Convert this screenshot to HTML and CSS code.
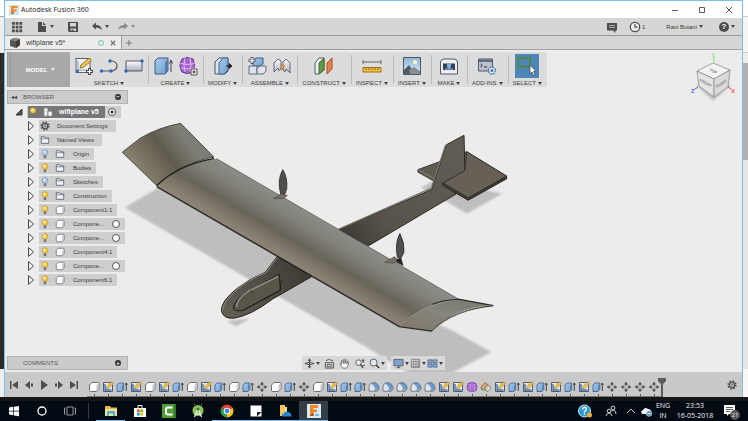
FILE: index.html
```html
<!DOCTYPE html>
<html lang="en">
<head>
<meta charset="utf-8">
<title>Autodesk Fusion 360</title>
<link rel="stylesheet" href="styles.css">
</head>
<body>
<svg class="sprite" aria-hidden="true">
  <defs>
    <linearGradient id="blueFace" x1="0" y1="0" x2="1" y2="1"><stop offset="0" stop-color="#a8cdf0"/><stop offset="1" stop-color="#6d9dcf"/></linearGradient>
    <linearGradient id="greyFace" x1="0" y1="0" x2="0" y2="1"><stop offset="0" stop-color="#fdfdfe"/><stop offset="1" stop-color="#a9b0ba"/></linearGradient>
    <linearGradient id="sky" x1="0" y1="0" x2="0" y2="1"><stop offset="0" stop-color="#8ab6d8"/><stop offset="1" stop-color="#e3eef4"/></linearGradient>
  </defs>
  <symbol id="cube" viewBox="0 0 12 12"><path d="M1.500 4 4 1.500h6q1 0 1 1V8L8.500 10.500h-6q-1 0-1-1z" fill="#fff" stroke="#6a6e76"/><path d="M8.500 10V4.200L10.800 2v6z" fill="#c3c8d0"/></symbol>
  <symbol id="sketch" viewBox="0 0 12 12"><path d="M1.500 1.500h9v9h-9z" fill="#e8eef6" stroke="#555c66"/><path d="M3 3v6h6.500" fill="none" stroke="#3d6fb4" stroke-width="1.400"/><path d="m4.800 5.500 4.800-4.800 2 2-4.800 4.500-2.400.7z" fill="#f0c04a" stroke="#8e702c" stroke-width=".5"/></symbol>
  <symbol id="extrude" viewBox="0 0 12 12"><path d="M1 4 2.800 2h5v6.500L6 10.500H1z" fill="url(#blueFace)" stroke="#47678e" stroke-width=".9"/><path d="M6 10V4.200L7.700 2.500v6z" fill="#5784b8"/><path d="M10.300 10V2.500M9.200 3.800l1.100-1.800 1.100 1.800" fill="none" stroke="#333" stroke-width=".9"/></symbol>
  <symbol id="fillet" viewBox="0 0 12 12"><path d="M1 10V5.500Q1.500 1.500 6 1.500q4.500.5 5 5.500v1.500L8.500 10.500H7V9L4.500 10.500z" fill="#dce4ee" stroke="#5b646f" stroke-width=".8"/><path d="M4 2.500 6.500 1.800Q10 3 10.500 7.500L8 9.500Q7.500 5 4 2.500z" fill="#6b9bd0" stroke="#446b9b" stroke-width=".5"/></symbol>
  <symbol id="move" viewBox="0 0 12 12"><path d="M6 .7 8 3.400H6.600v1.400H5.400V3.400H4zM6 11.300 4 8.600h1.400V7.200h1.200v1.400H8zM.7 6l2.700-2v1.400h1.400v1.200H3.400V8zM11.300 6 8.600 8V6.600H7.200V5.400h1.400V4z" fill="#4c4c4c"/></symbol>
  <symbol id="form" viewBox="0 0 12 12"><path d="M2 2.500q4-2.500 8 0 2 3.500 0 7-4 2.500-8 0-2-3.500 0-7z" fill="#a768cf" stroke="#6d3f98" stroke-width=".8"/><path d="M1 6q5 1.500 10 0M2 3.500q4 1.200 8 0M2 8.800q4 1.200 8 0M4.500 1.500q-1 4.500 0 9M8 1.500q1 4.500 0 9" fill="none" stroke="#c797e4" stroke-width=".5"/></symbol>
  <symbol id="pattern" viewBox="0 0 12 12"><path d="M1 6 5 1.500 8 4 4.500 9 1.500 8.500z" fill="#dca27e" stroke="#80543c" stroke-width=".7"/><path d="M5 6.500 8.500 4 11 7.500 8 10.500 5.500 9.500z" fill="#ded9c7" stroke="#66695a" stroke-width=".7"/><path d="M3 7.500h4l-1 2H3z" fill="#7fb06d"/></symbol>
  <symbol id="folder" viewBox="0 0 12 12"><path d="M1.500 10V2h4l1 1.500h4V10z" fill="#eef1f5" stroke="#596270"/><path d="M1.500 4.500h9" stroke="#596270" stroke-width=".8"/></symbol>
  <symbol id="bulb" viewBox="0 0 12 12"><circle cx="6" cy="4.300" r="3.400" fill="var(--glow)" stroke="var(--rim)" stroke-width=".8"/><path d="M4.500 7.500h3v3.500h-3z" fill="#77746b"/><circle cx="5" cy="3.400" r="1.200" fill="#fff" opacity=".85"/></symbol>
  <symbol id="gear" viewBox="0 0 12 12"><circle cx="6" cy="6" r="4.700" fill="none" stroke="#505050" stroke-width="1.800" stroke-dasharray="1.850 1.840"/><circle cx="6" cy="6" r="3.300" fill="#d8d8d8" stroke="#505050" stroke-width="1.500"/><circle cx="6" cy="6" r="1.300" fill="none" stroke="#505050" stroke-width=".9"/></symbol>
  <symbol id="tri" viewBox="0 0 8 12"><path d="M1.500 1.500 6.500 6l-5 4.500z" fill="#f2f2f2" stroke="#4a4a4a"/></symbol>
</svg>

<div class="desktop">
  <div class="behind behind-left"></div>
  <main class="app">
    <header class="titlebar">
      <svg class="i10" viewBox="0 0 10 10"><path fill="#cfe4f2" d="M0 0h10v10H0z"/><path fill="#f08a24" d="M2 1h6.500v2H4.500v1.500h3v2h-3V9H2z"/><path fill="#b65b18" d="m2 9 2.500-2.500V9z"/></svg>
      <h1>Autodesk Fusion 360</h1>
      <div class="winbtns">
        <button aria-label="Minimize"><svg viewBox="0 0 8 8"><path d="M1 4.500h6"/></svg></button>
        <button aria-label="Maximize"><svg viewBox="0 0 8 8"><path d="M1.500 1.500h5v5h-5z"/></svg></button>
        <button aria-label="Close"><svg viewBox="0 0 8 8"><path d="m1 1 6 6M7 1 1 7"/></svg></button>
      </div>
    </header>

    <nav class="quickbar">
      <button class="q-grid" aria-label="Data panel"><svg class="i12" viewBox="0 0 12 12"><path fill="#4d4d4d" d="M1 1h2.800v2.800H1zM4.700 1h2.800v2.800H4.700zM8.400 1h2.800v2.800H8.400zM1 4.700h2.800v2.800H1zM4.700 4.700h2.800v2.800H4.700zM8.400 4.700h2.800v2.800H8.400zM1 8.400h2.800v2.800H1zM4.700 8.400h2.800v2.800H4.700zM8.400 8.400h2.800v2.800H8.400z"/></svg></button>
      <button class="q-file" aria-label="File"><svg class="i12" viewBox="0 0 12 12"><path fill="#4d4d4d" d="M2 1h4v4h4v6H2zM7 1l3 3H7z"/></svg><i class="caret"></i></button>
      <button class="q-save" aria-label="Save"><svg class="i12" viewBox="0 0 12 12"><path fill="#4d4d4d" fill-rule="evenodd" d="M1 1h10v10H2l-1-1zM3 2v3.500h6V2zM3.500 7.500V10h1V8.500h2V10H9V7.500z"/></svg></button>
      <button class="q-undo" aria-label="Undo"><svg class="i12" viewBox="0 0 12 12"><path fill="#4d4d4d" d="m1 5 4-3.500V4q5 0 6 5-2-2.500-6-2.500v2z"/></svg><i class="caret"></i></button>
      <button class="q-redo" aria-label="Redo"><svg class="i12" viewBox="0 0 12 12"><path fill="#8b8b8b" d="M11 5 7 1.500V4Q2 4 1 9q2-2.500 6-2.500v2z"/></svg><i class="caret faint"></i></button>
      <div class="account">
        <button aria-label="Comments"><svg class="i12" viewBox="0 0 12 12"><path fill="#4d4d4d" d="M1 2h10v7.500H9.500V12L7 9.500H1z"/><path stroke="#aaa" d="M3 4.500h6M3 6.500h6"/></svg></button>
        <button class="jobs" aria-label="Job status"><svg class="i12" viewBox="0 0 12 12"><circle cx="6" cy="6" r="4.700" fill="#eee" stroke="#4d4d4d" stroke-width="1.300"/><path d="M6 3v3.200h2.500" fill="none" stroke="#4d4d4d" stroke-width="1.200"/></svg>1</button>
        <button class="user">Ravi Butani<i class="caret"></i></button>
        <button class="help" aria-label="Help"><span class="qmark">?</span><i class="caret"></i></button>
      </div>
    </nav>

    <nav class="tabs">
      <div class="tab">
        <svg class="i12" viewBox="0 0 12 12"><path d="m1 3 4-2 6 1v6l-4 3-6-2z" fill="#555"/><path d="m1 3 6 1.200L11 2 5 1z" fill="#888"/><path d="M7 4.200V11l4-3V2z" fill="#3b3b3b"/></svg>
        <span>wifiplane v5*</span>
        <i class="ring"></i>
        <button aria-label="Close tab"><svg class="i6" viewBox="0 0 6 6"><path d="m.8.800 4.400 4.400M5.200.800.800 5.200" stroke="#777" stroke-width="1.300"/></svg></button>
      </div>
      <button class="newtab" aria-label="New tab"><svg class="i6" viewBox="0 0 6 6"><path d="M3 0v6M0 3h6" stroke="#777"/></svg></button>
    </nav>

    <section class="workspace">
      <svg class="canvas" viewBox="5 49 737 323" role="img" aria-label="Airplane model">
        <defs>
          <linearGradient id="wing" gradientUnits="userSpaceOnUse" x1="310" y1="213" x2="283" y2="259"><stop offset="0" stop-color="#8a8d86"/><stop offset=".25" stop-color="#81827a"/><stop offset=".6" stop-color="#69645a"/><stop offset=".85" stop-color="#827b6e"/><stop offset="1" stop-color="#8d8578"/></linearGradient>
          <linearGradient id="tip" gradientUnits="userSpaceOnUse" x1="138" y1="170" x2="190" y2="130"><stop offset="0" stop-color="#89826f"/><stop offset=".5" stop-color="#5f5a4e"/><stop offset=".85" stop-color="#7d7e76"/><stop offset="1" stop-color="#7b7d76"/></linearGradient>
          <linearGradient id="tip2" x1="0" y1="1" x2="1" y2="0"><stop offset="0" stop-color="#7f7767"/><stop offset=".5" stop-color="#85857c"/><stop offset="1" stop-color="#75766f"/></linearGradient>
          <linearGradient id="body" gradientUnits="userSpaceOnUse" x1="340" y1="235" x2="465" y2="150"><stop offset="0" stop-color="#3c3933"/><stop offset=".3" stop-color="#57534b"/><stop offset="1" stop-color="#625d54"/></linearGradient>
          <linearGradient id="nose" gradientUnits="userSpaceOnUse" x1="225" y1="312" x2="300" y2="265"><stop offset="0" stop-color="#625e54"/><stop offset="1" stop-color="#403d37"/></linearGradient>
          <filter id="soft"><feGaussianBlur stdDeviation="1"/></filter>
        </defs>
        <g fill="#bebebe" filter="url(#soft)">
          <path d="m124 207 34-20 180 98 112 44 42 23-42 22h-40l-47-29z"/>
          <path d="m421 187 14-7 68 13-36 20-27-16zM226 321l10 5 14-8z"/>
        </g>
        <path d="m418 169 49-18 40 24.500V178l-38.500 21.500L418 171.500z" fill="#605b51" stroke="#22201d" stroke-width=".8"/>
        <path d="m418 169 50.500 28.500L507 175.700" fill="none" stroke="#99958b" stroke-width=".7"/>
        <path d="m338 229 93.700-40 15-45 17.600-9.500 1 36-22 12.500 13 10.500-88 52z" fill="url(#body)" stroke="#24221e" stroke-width=".9"/>
        <path d="m339 228.500 92.500-41 14-42.500 1.500-1" fill="none" stroke="#77776f" stroke-width="1.200"/>
        <path d="m465 170-22 12.500 25.500 15 38.500-22L467 151z" fill="#666056" stroke="#24221e" stroke-width=".7"/>
        <path d="m443 182.500 25.500 15L507 176v2.300l-38.500 21.400L443 185z" fill="#444038" stroke="#1f1d1a" stroke-width=".6"/>
        <path d="m277 256-12 16q-17 7-28 16-17 13-16 23 2 8 13 7 17-3 38-19l40-23z" fill="url(#nose)" stroke="#23211e"/>
        <path d="m277 257-11.500 15.500q-18 7-28.500 16.500-15 12-15 22" fill="none" stroke="#8e8d83"/>
        <path d="m279 274 1 16-37 20q-9 2-10-2 1-8 13-16z" fill="#5a554b" stroke="#1f1d1a"/>
        <path d="m278 276-30 15q-12 8-12 16" fill="none" stroke="#969085" stroke-width="1.500"/>
        <path d="m281 280-1 10-37 20M250 290l3 2.500" fill="none" stroke="#1c1a18" stroke-width=".8"/>
        <path d="M156 185.500q25-24 60-27.500l243 141q-40 6-59 27z" fill="url(#wing)"/>
        <path d="m216 158 243 141" fill="none" stroke="#5b5d57" stroke-width=".8"/>
        <path d="m156 186 243.500 140.500" fill="none" stroke="#292722" stroke-width="1.500"/>
        <path d="m121.500 151.500 18-14Q157 127 180 122.500l33 33.500q-35 8-57 29z" fill="url(#tip)" stroke="#34322d" stroke-width=".8"/>
        <path d="M156 185q22-21 57-27l-1-2" fill="none" stroke="#1c1b18" stroke-width="1.200"/>
        <path d="M400 326q19-21 59-27l34.700 6q-39 2-62.200 26z" fill="url(#tip2)"/>
        <path d="m399 326.500 32.500 4.500q23-22 62.200-25.500l-35-6.500q-17 1-26 5" fill="none" stroke="#2b2a25" stroke-width="1.200"/>
        <path d="M432 330q24-21 61-25.500" fill="none" stroke="#aaa79c" stroke-width=".6"/>
        <g fill="#4d504b" stroke="#272824" stroke-width=".8">
          <path d="M282.500 169q5 8 4 19l-2 6h-4q-4-15 2-25z"/>
          <path d="m273 198 8-4.500 6 1.500-4 3z" fill="#776f63" stroke="#5c554c"/>
          <path d="M400 233q5 10 4 19l-3 6-3.500-1q-3-14 2.500-24z"/>
          <path d="m384.500 262 10-5.500 4 3.500-5 3z" fill="#776f63" stroke="#5c554c"/>
          <path d="m397 259 4-1 2 7-6-3z" fill="#262724"/>
        </g>
      </svg>

      <div class="ribbon">
        <button class="model">MODEL<i class="caret light"></i></button>
        <div class="group sketchgrp"><div class="icons">
          <svg viewBox="0 0 20 20"><rect x="2" y="2.500" width="14" height="14" fill="#eef2f7" stroke="#59616d"/><path d="M4 5v9h9" fill="none" stroke="#8897ac"/><path d="m6 12 1-3 8-7 2.500 2.500-8 7z" fill="#f1c14c" stroke="#7c6228" stroke-width=".8"/><circle cx="3.500" cy="15" r="1.500" fill="#2d66c4"/><path d="M15.500 12v7M12 15.500h7" stroke="#444" stroke-width="3"/><path d="M15.500 13v5M13 15.500h5" stroke="#fff" stroke-width="1.200"/></svg>
          <svg viewBox="0 0 20 20"><path d="M2 15h11q5-1 5-5t-5-5h-2" fill="none" stroke="#555" stroke-width="1.200"/><g fill="#2d66c4"><circle cx="2.500" cy="15" r="1.700"/><circle cx="12" cy="15" r="1.700"/><circle cx="11" cy="5" r="1.700"/></g></svg>
          <svg viewBox="0 0 20 20"><path d="M2 5h16v10H2z" fill="url(#greyFace)" stroke="#535b66"/><g fill="#2d66c4"><circle cx="18" cy="5" r="1.700"/><circle cx="2" cy="15" r="1.700"/></g></svg>
        </div><button>SKETCH<i class="caret"></i></button></div>
        <div class="group"><div class="icons">
          <svg viewBox="0 0 20 20"><path d="m2 5 3-3h10v13l-3 3H2z" fill="url(#blueFace)" stroke="#3f5d83"/><path d="M12 17V6l3-3v12z" fill="#547eaf"/><path d="M18 16V5M16.500 7.500 18 4l1.500 3.500" fill="none" stroke="#333" stroke-width=".9"/></svg>
          <svg viewBox="0 0 20 20"><path d="M4 3q5-3 11 0 3 6 0 13-6 3-11 0-4-6 0-13z" fill="#a565cd" stroke="#64378d"/><path d="M2.500 7.500q7 2 14 0M2.500 12q7 2 14 0M7 2q-2 7 0 14M12 2q2 7 0 14" fill="none" stroke="#e0bdf3"/><path d="M13 13h6v6h-6z" fill="#eee" stroke="#555"/><path d="M16 14.500v3M14.500 16h3" stroke="#333"/></svg>
        </div><button>CREATE<i class="caret"></i></button></div>
        <div class="group"><div class="icons">
          <svg viewBox="0 0 20 20"><path d="m2 6 4-4h9v13l-3 3H2z" fill="#dbe3ed" stroke="#47566b"/><path d="m6 7 4-5h5v12l-4 4H6z" fill="url(#blueFace)" stroke="#44678f"/><path d="M13 10h4M16 7.500l3 2.500-3 2.500z" stroke="#222" fill="#222"/></svg>
        </div><button>MODIFY<i class="caret"></i></button></div>
        <div class="group"><div class="icons">
          <svg viewBox="0 0 20 20"><path d="m6 4 3-2h7v6l-3 2H6z" fill="url(#blueFace)" stroke="#3f5d83"/><path d="M2 10h8v8H2z" fill="#dde3ea" stroke="#606a77"/><path d="m10 12 3-2h6v5l-3 3h-6z" fill="#e1e6ed" stroke="#606a77"/><path d="M5 1v7M1.500 4.500h7" stroke="#555" stroke-width="3"/><path d="M5 2v5M2.500 4.500h5" stroke="#fff" stroke-width="1.300"/></svg>
          <svg viewBox="0 0 20 20"><path d="m2 7 4-4 3 2v8l-2 2-1-3-4 4zM18 7l-4-4-3 3v8l2 2 1-3 4 4z" fill="url(#greyFace)" stroke="#626b77"/><path d="m9 8 3 2-3 4" fill="none" stroke="#e0812c" stroke-width="1.500"/></svg>
        </div><button>ASSEMBLE<i class="caret"></i></button></div>
        <div class="group"><div class="icons">
          <svg viewBox="0 0 20 20"><path d="m1 7 4-5h5v12l-5 4H1z" fill="#eceff2" stroke="#59616a"/><path d="m5 7 5-5v12l-5 4z" fill="#5f9a47" stroke="#41722e"/><path d="m13 7 5-5v11l-5 5z" fill="#e98248" stroke="#a65225"/></svg>
        </div><button>CONSTRUCT<i class="caret"></i></button></div>
        <div class="group"><div class="icons">
          <svg viewBox="0 0 20 20"><path d="M1 6h18M1 4v4M19 4v4" stroke="#666" fill="none"/><path d="M1 11.500h18V16H1z" fill="#f2bd3c" stroke="#a2731d"/><path d="M4 12v2M7 12v2M10 12v2M13 12v2M16 12v2" stroke="#76541a" stroke-width=".8"/></svg>
        </div><button>INSPECT<i class="caret"></i></button></div>
        <div class="group"><div class="icons">
          <svg viewBox="0 0 20 20"><path d="M1.500 1.500h17v17h-17z" fill="url(#sky)" stroke="#4c5660"/><circle cx="13" cy="6" r="2" fill="#fff8c6"/><path d="m2 14 5-5 6 9H2z" fill="#505963"/><path d="m7 14 5-3 6 4v3H8z" fill="#858d95"/></svg>
        </div><button>INSERT<i class="caret"></i></button></div>
        <div class="group"><div class="icons">
          <svg viewBox="0 0 20 20"><path d="M1.500 6q.5-3 3.500-3h10q3 0 3.500 3v12h-17z" fill="#eceff2" stroke="#505862"/><path d="M4 7.500h12V14H4z" fill="#37404c"/><path d="M8 8h4v3l-2 2-2-2z" fill="#79b4ed"/><path d="M6 13h8" stroke="#91bfe8"/></svg>
        </div><button>MAKE<i class="caret"></i></button></div>
        <div class="group"><div class="icons">
          <svg viewBox="0 0 20 20"><path d="M1.500 3h14v12h-14z" fill="#b9c1cd" stroke="#4e5866"/><path d="M2 3.500h13V6H2z" fill="#616d7f"/><path d="m3.500 8 2 1.500-2 1.500M7 11h3" fill="none" stroke="#333"/><circle cx="15" cy="14.500" r="3.500" fill="#e8eef7" stroke="#4a72ae" stroke-width="1.500" stroke-dasharray="1.800 .9"/><circle cx="15" cy="14.500" r="1.500" fill="#4a72ae"/></svg>
        </div><button>ADD-INS<i class="caret"></i></button></div>
        <div class="group select"><div class="icons">
          <svg viewBox="0 0 24 24"><path d="M0 0h24v24H0z" fill="#4f86b8"/><path d="M3 4h12v8.500H3z" fill="none" stroke="#4f8a2a" stroke-width="1.500"/><path d="M15 11v9l2-2 1.500 3.500 1.500-.7-1.500-3.300H21z" fill="#fff" stroke="#444" stroke-width=".7"/></svg>
        </div><button>SELECT<i class="caret"></i></button></div>
      </div>

      <svg class="viewcube" viewBox="0 0 50 50" role="img" aria-label="View cube">
        <path d="m7 32 17 16 18-16-18-6z" fill="#999" opacity=".55" filter="url(#soft)"/>
        <path d="m8 18 16-8 17 7-16 9z" fill="#f3f3f3" stroke="#8c8c8c" stroke-width=".8"/>
        <path d="m8 18 17 8v18L10 33z" fill="#e5e5e5" stroke="#8c8c8c" stroke-width=".8"/>
        <path d="m41 17-16 9v18l14-10z" fill="#dadada" stroke="#8c8c8c" stroke-width=".8"/>
        <path d="M25 3v6" stroke="#78df78"/><path d="m9 34-3 2" stroke="#4f4fe8"/><path d="m39 34 3 2" stroke="#e84f4f"/>
        <g font-family="Liberation Sans, sans-serif" font-weight="bold">
          <text x="22" y="4" font-size="6" fill="#88e688">Y</text><text x="2" y="40" font-size="6" fill="#5656ee">Z</text><text x="42" y="40" font-size="6" fill="#ee5656">X</text>
          <g font-size="4" fill="#888"><text transform="translate(10 28) rotate(28)">FRONT</text><text transform="translate(28 35) rotate(-32)">RIGHT</text><text transform="translate(20 18) rotate(22)">TOP</text></g>
        </g>
      </svg>

      <aside class="browser">
        <div class="panelhead"><span class="rewind">◂◂</span><h2>BROWSER</h2><button class="dot" aria-label="Collapse">−</button></div>
        <ul class="tree">
          <li class="root"><svg class="tri" viewBox="0 0 8 8"><path d="M7 1v6H1z" fill="#555" stroke="#333"/></svg><div class="row"><span class="active"><svg class="i10 on"><use href="#bulb"/></svg><svg class="i10" viewBox="0 0 12 12"><path d="M1 1h5v10H1z" fill="#eee" stroke="#777"/><path d="M6 5h5v6H6z" fill="#fff" stroke="#777"/></svg><b>wifiplane v5</b></span><input type="radio" name="active" checked aria-label="Activate wifiplane"></div></li>
          <li><svg class="tri"><use href="#tri"/></svg><div class="row wide"><svg class="i10"><use href="#gear"/></svg><span>Document Settings</span></div></li>
          <li><svg class="tri"><use href="#tri"/></svg><div class="row wide"><svg class="i10"><use href="#folder"/></svg><span>Named Views</span></div></li>
          <li><svg class="tri"><use href="#tri"/></svg><div class="row"><svg class="i10 off"><use href="#bulb"/></svg><svg class="i10"><use href="#folder"/></svg><span>Origin</span></div></li>
          <li><svg class="tri"><use href="#tri"/></svg><div class="row"><svg class="i10 on"><use href="#bulb"/></svg><svg class="i10"><use href="#folder"/></svg><span>Bodies</span></div></li>
          <li><svg class="tri"><use href="#tri"/></svg><div class="row"><svg class="i10 off"><use href="#bulb"/></svg><svg class="i10"><use href="#folder"/></svg><span>Sketches</span></div></li>
          <li><svg class="tri"><use href="#tri"/></svg><div class="row"><svg class="i10 on"><use href="#bulb"/></svg><svg class="i10"><use href="#folder"/></svg><span>Construction</span></div></li>
          <li><svg class="tri"><use href="#tri"/></svg><div class="row"><svg class="i10 on"><use href="#bulb"/></svg><svg class="i10"><use href="#cube"/></svg><span>Component1:1</span></div></li>
          <li><svg class="tri"><use href="#tri"/></svg><div class="row"><svg class="i10 on"><use href="#bulb"/></svg><svg class="i10"><use href="#cube"/></svg><span class="cut">Compone...</span><input type="radio" name="active" aria-label="Activate component 2"></div></li>
          <li><svg class="tri"><use href="#tri"/></svg><div class="row"><svg class="i10 on"><use href="#bulb"/></svg><svg class="i10"><use href="#cube"/></svg><span class="cut">Compone...</span><input type="radio" name="active" aria-label="Activate component 3"></div></li>
          <li><svg class="tri"><use href="#tri"/></svg><div class="row"><svg class="i10 on"><use href="#bulb"/></svg><svg class="i10"><use href="#cube"/></svg><span>Component4:1</span></div></li>
          <li><svg class="tri"><use href="#tri"/></svg><div class="row"><svg class="i10 on"><use href="#bulb"/></svg><svg class="i10"><use href="#cube"/></svg><span class="cut">Compone...</span><input type="radio" name="active" aria-label="Activate component 5"></div></li>
          <li><svg class="tri"><use href="#tri"/></svg><div class="row"><svg class="i10 on"><use href="#bulb"/></svg><svg class="i10"><use href="#cube"/></svg><span>Component6:1</span></div></li>
        </ul>
      </aside>

      <div class="bottom">
        <div class="panelhead comments"><h2>COMMENTS</h2><button class="dot" aria-label="Expand">+</button></div>
        <div class="navbars">
          <div class="navbar">
            <button aria-label="Orbit"><svg class="i12" viewBox="0 0 12 12"><path d="M6 1v10M1 6q5-3 10 0-5 3-10 0" fill="none" stroke="#444"/><path d="m4 3 2-2.500L8 3zM4 9l2 2.500L8 9z" fill="#444"/></svg><i class="caret"></i></button>
            <button aria-label="Look at"><svg class="i12" viewBox="0 0 12 12"><path d="M1.500 5h9v6h-9zM3.500 7h5v2.500h-5zM2 3l3-1.500L10 3" fill="none" stroke="#555"/></svg></button>
            <button aria-label="Pan"><svg class="i12" viewBox="0 0 12 12"><path d="M4 11 1 7q0-1.500 2 0L2.500 3q1-1 1.500.500L5 6V1.500q1-1 1.400 0V6L7.500 2q1.200-.5 1.200.5L8.500 6.500l1-2.500q1.300-.3 1 1L9.500 9 8 11z" fill="#fff" stroke="#555" stroke-width=".8"/></svg></button>
            <button aria-label="Zoom"><svg class="i12" viewBox="0 0 12 12"><circle cx="5" cy="5" r="3" fill="#edf3f7" stroke="#555"/><path d="m7 7 3 4" stroke="#444" stroke-width="1.500"/><path d="M10 1v4M8.500 3h3M9 8h3" stroke="#444"/></svg></button>
            <button aria-label="Fit"><svg class="i12" viewBox="0 0 12 12"><circle cx="5" cy="5" r="3.800" fill="#dcebf2" stroke="#555"/><path d="m8 8 3 3" stroke="#333" stroke-width="1.600"/></svg><i class="caret"></i></button>
          </div>
          <div class="navbar tight">
            <button aria-label="Display"><svg class="i12" viewBox="0 0 12 12"><path d="M1 1.500h10v7H1z" fill="#7fa3d0" stroke="#596370"/><path d="M4 10.500h4M6 8v3" stroke="#555"/></svg><i class="caret"></i></button>
            <button aria-label="Grid"><svg class="i12" viewBox="0 0 12 12"><path d="M1.500 1.500h9v9h-9zM4 1v10M6.500 1v10M9 1v10M1 4h10M1 6.500h10M1 9h10" fill="#e8e8e8" stroke="#777" stroke-width=".8"/></svg><i class="caret"></i></button>
            <button aria-label="Viewports"><svg class="i12" viewBox="0 0 12 12"><path d="M1 2h4.500v3.500H1zM6.500 2H11v3.500H6.500zM1 6.500h4.500V10H1zM6.500 6.500H11V10H6.500z" fill="#88a8d0" stroke="#48678f" stroke-width=".8"/></svg><i class="caret"></i></button>
          </div>
        </div>
      </div>
    </section>

    <footer class="timeline">
      <div class="player">
        <button aria-label="To start"><svg viewBox="0 0 10 10"><path d="M1 1h1.500v8H1zM9 1v8L3 5z"/></svg></button>
        <button aria-label="Step back"><svg viewBox="0 0 10 10"><path d="M6 1v8L1 5zM7 3.500h2v3H7z"/></svg></button>
        <button aria-label="Play"><svg viewBox="0 0 10 10"><path d="M2 0v10l7-5z"/></svg></button>
        <button aria-label="Step forward"><svg viewBox="0 0 10 10"><path d="M4 1v8l5-4zM1 3.500h2v3H1z"/></svg></button>
        <button aria-label="To end"><svg viewBox="0 0 10 10"><path d="M7.500 1H9v8H7.500zM1 1v8l6-4z"/></svg></button>
      </div>
      <ol class="steps">
        <li><svg><use href="#cube"/></svg></li><li><svg><use href="#sketch"/></svg></li><li><svg><use href="#extrude"/></svg></li><li><svg><use href="#sketch"/></svg></li><li><svg><use href="#cube"/></svg></li><li><svg><use href="#sketch"/></svg></li><li><svg><use href="#extrude"/></svg></li><li><svg><use href="#cube"/></svg></li><li><svg><use href="#sketch"/></svg></li><li><svg><use href="#extrude"/></svg></li><li><svg><use href="#cube"/></svg></li><li><svg><use href="#extrude"/></svg></li><li><svg><use href="#move"/></svg></li><li><svg><use href="#cube"/></svg></li><li><svg><use href="#extrude"/></svg></li><li><svg><use href="#move"/></svg></li><li><svg><use href="#cube"/></svg></li><li><svg><use href="#sketch"/></svg></li><li><svg><use href="#extrude"/></svg></li><li><svg><use href="#extrude"/></svg></li><li><svg><use href="#fillet"/></svg></li><li><svg><use href="#fillet"/></svg></li><li><svg><use href="#fillet"/></svg></li><li><svg><use href="#fillet"/></svg></li><li><svg><use href="#fillet"/></svg></li><li><svg><use href="#sketch"/></svg></li><li><svg><use href="#sketch"/></svg></li><li><svg><use href="#form"/></svg></li><li><svg><use href="#pattern"/></svg></li><li><svg><use href="#sketch"/></svg></li><li><svg><use href="#extrude"/></svg></li><li><svg><use href="#sketch"/></svg></li><li><svg><use href="#extrude"/></svg></li><li><svg><use href="#sketch"/></svg></li><li><svg><use href="#extrude"/></svg></li><li><svg><use href="#sketch"/></svg></li><li><svg><use href="#extrude"/></svg></li><li><svg><use href="#move"/></svg></li><li><svg><use href="#move"/></svg></li><li><svg><use href="#move"/></svg></li><li><svg><use href="#move"/></svg></li>
      </ol>
      <svg class="marker" viewBox="0 0 8 20"><path d="M0 1h8v3L5 7v13H3V7L0 4z" fill="#5b5b5b"/></svg>
      <button class="settings" aria-label="Timeline settings"><svg class="i10"><use href="#gear"/></svg></button>
    </footer>
  </main>
  <div class="behind behind-right"></div>
</div>

<footer class="taskbar">
  <button class="sys" aria-label="Start"><svg viewBox="0 0 12 12"><path fill="#fff" d="m1 2.500 4.300-.7v3.900H1zM6 1.700l5-.8v4.800H6zM1 6.400h4.300v3.900L1 9.600zM6 6.400h5v4.800l-5-.8z"/></svg></button>
  <button class="sys" aria-label="Cortana"><svg viewBox="0 0 12 12"><circle cx="6" cy="6" r="4" fill="none" stroke="#fff" stroke-width="1.300"/></svg></button>
  <button class="sys" aria-label="Task view"><svg viewBox="0 0 12 12"><path fill="none" stroke="#aaa" stroke-width=".9" d="M3 2h6v8H3zM1.500 3H.500v6h1M10.500 3h1v6h-1"/></svg></button>
  <i class="split"></i>
  <button class="task open" aria-label="Explorer"><svg viewBox="0 0 14 14"><path d="M1 2h5l1 1.500h6V12H1z" fill="#e6b657"/><path d="M1 5h12v7H1z" fill="#fbdf8b"/><path d="M3 12V8q0-1 1-1h6q1 0 1 1v4H9V9.500H5V12z" fill="#4aaede"/></svg></button>
  <button class="task" aria-label="Store"><svg viewBox="0 0 14 14"><path d="M1 4h12v9H1z" fill="#fff"/><path d="M5 4V1.500h4V4" fill="none" stroke="#fff"/><path fill="#f25022" d="M4 5.500h2.700v2.700H4z"/><path fill="#7fba00" d="M7.300 5.500H10v2.700H7.300z"/><path fill="#00a4ef" d="M4 8.800h2.700v2.700H4z"/><path fill="#ffb900" d="M7.300 8.800H10v2.700H7.300z"/></svg></button>
  <button class="task" aria-label="Camtasia"><svg viewBox="0 0 14 14"><path d="M0 0h14v14H0z" fill="#4d9f35"/><path d="M12 0v14h2V0z" fill="#38762a"/><path d="M10.500 3.500H6q-2 0-2 2v3q0 2 2 2h4.500" fill="none" stroke="#fff" stroke-width="2"/></svg></button>
  <button class="task" aria-label="Android Studio"><svg viewBox="0 0 14 14"><circle cx="7" cy="6.500" r="5.500" fill="#8bc05a"/><path d="m4 1-1-1M10 1l1-1" stroke="#8bc05a"/><path d="m7 4-3.500 9M7 4l3.500 9M4 10h6" stroke="#e6ece2" stroke-width="1.300" fill="none"/><circle cx="7" cy="5" r="1.500" fill="#446c35"/></svg></button>
  <button class="task open" aria-label="Chrome"><svg viewBox="0 0 14 14"><path d="M7 7 1.400 3.800A6.500 6.500 0 0 1 12.600 3.800z" fill="#e34133"/><path d="M7 7l5.600-3.200A6.500 6.500 0 0 1 7 13.500z" fill="#fbc116"/><path d="M7 7v6.500A6.500 6.500 0 0 1 1.400 3.800z" fill="#2ca14c"/><circle cx="7" cy="7" r="3.300" fill="#fff"/><circle cx="7" cy="7" r="2.400" fill="#4285f4"/></svg></button>
  <button class="task open" aria-label="Sticky notes"><svg viewBox="0 0 14 14"><path d="M1.500 1.500h11v11h-11z" fill="#fff"/><path d="M12.500 8H8v4.500z" fill="#222"/></svg></button>
  <button class="task open" aria-label="Cloud files"><svg viewBox="0 0 14 14"><path d="M2 1h5l1 11H2z" fill="#f4c961"/><path d="M7 3h2v8H7z" fill="#fbe4a4"/><path d="M4 12.500q-.500-3 2-3 1-3 4-1.500 3 0 3.500 4.500z" fill="#2685d6"/></svg></button>
  <button class="task open current" aria-label="Fusion 360"><svg viewBox="0 0 14 14"><path fill="#d9ecf6" d="M0 0h14v14H0z"/><path fill="#ee8423" d="M3 1h8v3H6.500v1.500H10V8H6.500v4H3z"/><path d="m3 12 3.500-3.500V12z" fill="#9e4d17"/><path d="M8 11h4" stroke="#55abe0" stroke-width="1.500"/></svg></button>
  <div class="tray">
    <button class="t-help" aria-label="Support"><svg viewBox="0 0 14 14"><circle cx="6.500" cy="7" r="6" fill="#2798d0" stroke="#d7edf8"/><path d="M4.500 5.500q0-2 2-2t2 1.700Q8.500 6.300 6.500 7.500v1M6.500 9.500V11" fill="none" stroke="#fff" stroke-width="1.400"/><circle cx="11.500" cy="11" r="2.500" fill="#f3ae2b"/></svg></button>
    <button class="t-people" aria-label="People"><svg viewBox="0 0 12 12"><g fill="none" stroke="#e5e5e5" stroke-width=".9"><circle cx="4" cy="6" r="1.800"/><path d="M1 11q1-3 3-3t3 3"/><circle cx="8" cy="3" r="1.900"/><path d="M6.500 6q4-2 4.500 3"/></g></svg></button>
    <button class="t-caret" aria-label="Hidden icons"><svg viewBox="0 0 12 12"><path d="m2 8 4-4 4 4" fill="none" stroke="#ddd" stroke-width=".9"/></svg></button>
    <button class="t-cloud" aria-label="Sync"><svg viewBox="0 0 12 12"><path d="M2 9q-2-3 1-4 2-3.500 5-1 3 0 3 3 0 2-2 2z" fill="#f0f3f7"/><circle cx="9" cy="8.500" r="2.800" fill="#5b86be" stroke="#fff" stroke-width=".6"/><path d="M7.500 8.500h3" stroke="#fff"/></svg></button>
    <div class="stack lang"><span>ENG</span><span>IN</span></div>
    <div class="stack clock"><time>23:53</time><span>16-05-2018</span></div>
    <button class="notify" aria-label="21 notifications"><svg viewBox="0 0 14 14"><path d="M1 1h11v9H6l-2 2v-2H1z" fill="#fff"/><path d="M3 3.500h7M3 5.500h7M3 7.500h4" stroke="#333" stroke-width=".8"/></svg><span class="badge">21</span></button>
  </div>
</footer>
</body>
</html>
```
FILE: styles.css
```css
* { box-sizing: border-box; }
body {
  margin: 0;
  min-height: 100vh;
  display: flex;
  flex-direction: column;
  overflow: hidden;
  font: 6px/8px "Liberation Sans", sans-serif;
  color: #3c3c3c;
}
button {
  display: flex;
  align-items: center;
  justify-content: center;
  padding: 0;
  border: 0;
  background: none;
  font: inherit;
  color: inherit;
}
h1, h2, ul, ol { margin: 0; padding: 0; font: inherit; list-style: none; }
svg { display: block; flex: none; }
.sprite { position: absolute; width: 0; height: 0; }
.i6 { width: 6px; height: 6px; }
.i10 { width: 10px; height: 10px; }
.i12 { width: 12px; height: 12px; }
.caret {
  flex: none;
  margin-left: 2px;
  border: 2px solid transparent;
  border-top: 3px solid #444;
  border-bottom: 0;
}
.faint { border-top-color: #888; }
.light { border-top-color: #eee; margin-left: 4px; }

.desktop { flex: 1; display: flex; min-height: 0; }
.behind { flex: none; background: #f3f3f3; }
.behind-left {
  width: 4px;
  background: linear-gradient(#fff 0 16px, #aaa 16px 17px, #eee 17px 53px, #2b2b2b 53px 369px, #eee 369px);
}
.behind-right {
  width: 5px;
  background: linear-gradient(#fff 0 16px, #ccc 16px 17px, #f5f5f5 17px 52px, #ccc 52px 53px, #eee 53px 63px, #b0b0b0 63px 160px, #e6e6e6 160px 369px, #f8f8f8 369px);
}
.app {
  flex: 1;
  min-width: 0;
  display: flex;
  flex-direction: column;
  border: 1px solid #7dbdf0;
  border-bottom: 0;
  background: #ececec;
}

.titlebar {
  height: 17px;
  display: flex;
  align-items: center;
  gap: 2px;
  padding-left: 4px;
  background: #fff;
  font: 7px/10px "Open Sans", sans-serif;
  color: #222;
}
.winbtns { margin-left: auto; display: flex; }
.winbtns button { width: 27px; height: 16px; }
.winbtns svg { width: 8px; height: 8px; fill: none; stroke: #333; stroke-width: .8; }

.quickbar {
  height: 18px;
  display: flex;
  align-items: center;
  padding-left: 6px;
  background: #d6d6d6;
  border-bottom: 1px solid #999;
}
.q-file { margin-left: 13px; }
.q-save { margin-left: 13px; }
.q-undo { margin-left: 12px; }
.q-redo { margin-left: 8px; }
.account { margin-left: auto; display: flex; align-items: center; padding-right: 7px; }
.jobs { margin-left: 11px; gap: 1px; }
.user { margin-left: 21px; }
.help { margin-left: 16px; }
.qmark {
  width: 10px;
  height: 10px;
  border-radius: 5px;
  background: #4d4d4d;
  color: #fff;
  font: bold 8px/10px "Liberation Sans", sans-serif;
}

.tabs {
  height: 14px;
  display: flex;
  background: #d6d6d6;
  border-bottom: 1px solid #a2a2a2;
}
.tab {
  display: flex;
  align-items: center;
  width: 117px;
  padding: 0 5px 0 4px;
  background: #ececec;
  border-right: 1px solid #999;
  font-size: 7px;
}
.tab span { margin-left: 5px; }
.ring { width: 6px; height: 6px; margin: 0 6px 0 auto; border: 1px solid #72c4a4; border-radius: 3px; }
.newtab { width: 14px; }

.workspace {
  position: relative;
  flex: 1;
  min-height: 0;
  display: flex;
  flex-direction: column;
  align-items: flex-start;
  padding: 2px;
}
.canvas { position: absolute; inset: 0; width: 100%; height: 100%; }
.ribbon {
  position: relative;
  display: flex;
  height: 35px;
  background: #dcdcdc;
}
.model { width: 63px; background: #a9a9a9; color: #fff; font-weight: bold; border-left: 4px double #999; }
.group {
  position: relative;
  display: flex;
  flex-direction: column;
  align-items: center;
  justify-content: space-between;
  min-width: 36px;
  padding: 2px 4px 0;
}
.group + .group::before { content: ""; position: absolute; left: 0; top: 3px; bottom: 3px; width: 1px; background: #bdbdbd; }
.group button { height: 8px; }
.icons { display: flex; align-items: center; gap: 5px; height: 24px; }
.icons svg { width: 20px; height: 20px; }
.group:not(.sketchgrp) { padding: 2px 5px 0; }
.select .icons svg { width: 24px; height: 24px; }

.viewcube { position: absolute; top: 3px; right: 3px; width: 50px; height: 50px; overflow: visible; }

.browser { position: relative; margin-top: 3px; }
.panelhead {
  display: flex;
  align-items: center;
  width: 121px;
  height: 14px;
  padding: 0 5px 0 3px;
  background: #cbcbcb;
  border: 1px solid #b2b2b2;
  color: #5a5a5a;
}
.rewind { width: 12px; font-size: 6px; color: #333; }
.dot {
  width: 6px;
  height: 6px;
  margin-left: auto;
  margin-right: 1px;
  border-radius: 3px;
  background: #333;
  color: #fff;
  font: bold 6px/6px "Liberation Sans", sans-serif;
}
.tree { padding: 1px 0 0 20px; }
.tree li { display: flex; align-items: center; height: 14px; gap: 4px; }
.tree .tri { width: 8px; height: 12px; }
.root { margin-left: -12px; }
.root .tri { width: 8px; height: 8px; }
.row {
  display: flex;
  align-items: center;
  height: 12px;
  gap: 5px;
  padding: 0 5px 0 1px;
  background: #cecece;
}
.wide { padding-right: 8px; }
.row .off + svg, .row .on + svg { margin-right: 1px; }
.row span { margin-left: 2px; }
.root .row { gap: 3px; }
.row .active {
  display: flex;
  align-items: center;
  gap: 5px;
  height: 12px;
  margin-left: 0;
  padding-right: 6px;
  background: #777;
  color: #fff;
  font-size: 7px;
}
.on { --glow: #fbd246; --rim: #b98d22; }
.off { --glow: #b3cdf5; --rim: #7089b8; }
.row input {
  appearance: none;
  width: 8px;
  height: 8px;
  margin: 0;
  border: 1px solid #555;
  border-radius: 4px;
  background: #fff;
}
.row input:checked { background: radial-gradient(#333 0 1px, #fff 2px); }
.cut { width: 34px; }

.bottom { position: relative; display: grid; grid-template-columns: 121px 1fr; align-self: stretch; margin-top: auto; align-items: center; }
.comments { padding-left: 15px; }
.navbars { display: flex; gap: 4px; justify-content: center; padding-right: 122px; }
.navbar { display: flex; align-items: center; gap: 4px; height: 14px; padding: 0 2px; background: #d8d8d8; }
.tight { gap: 1px; }
.navbar .caret { margin-left: 1px; }
.navbar .i12 { width: 11px; height: 11px; }

.timeline {
  height: 25px;
  display: flex;
  align-items: stretch;
  padding: 0 4px 0 2px;
  background: #c9c9c9;
  overflow: hidden;
}
.player { display: flex; gap: 1px; width: 80px; padding-top: 1px; }
.player button { width: 14px; }
.player svg { width: 10px; height: 10px; fill: #4f4f4f; }
.steps { display: flex; }
.steps li { position: relative; width: 14px; border-bottom: 1px solid #777; padding: 9px 1px 0; }
.steps li::after { content: ""; position: absolute; left: 7px; bottom: 0; width: 1px; height: 2px; background: #555; }
.steps svg { width: 12px; height: 12px; }
.marker { width: 8px; height: 20px; margin: 5px 0 0 -3px; }
.settings { width: 12px; margin-left: auto; }

.taskbar {
  position: relative;
  flex: none;
  display: flex;
  height: 24px;
  background: #020a14;
  border-top: 4px solid #161616;
  color: #f2f2f2;
}
.taskbar svg { width: 14px; height: 14px; }
.sys { width: 28px; }
.taskbar .sys svg { width: 12px; height: 12px; }
.split { width: 1px; margin: 2px 7px 2px 4px; background: #333a44; }
.task { width: 29px; border-bottom: 1px solid transparent; }
.open { border-bottom-color: #76b9ed; background-clip: padding-box; }
.current { background-color: #353d47; }
.tray { display: flex; align-items: center; margin-left: auto; font: 7px/10px "Open Sans", sans-serif; }
.taskbar .tray button:not(.t-help):not(.notify) svg { width: 12px; height: 12px; }
.t-people { margin-left: 13px; }
.t-caret { margin-left: 8px; }
.t-cloud { margin-left: 3px; }
.stack { display: flex; flex-direction: column; align-items: center; }
.lang { width: 22px; }
.clock { width: 42px; }
.notify { position: relative; width: 27px; margin-right: 5px; }
.badge {
  position: absolute;
  right: 3px;
  bottom: -2px;
  width: 10px;
  height: 10px;
  border-radius: 5px;
  background: #555;
  font: 6px/10px "Open Sans", sans-serif;
}
```
